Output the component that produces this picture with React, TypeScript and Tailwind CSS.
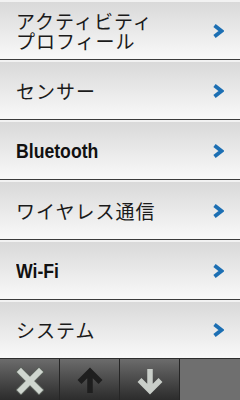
import { ReactNode } from 'react';

type Item = { label: ReactNode; bold?: boolean };

const items: Item[] = [
    { label: <>アクティビティ<br />プロフィール</> },
    { label: 'センサー' },
    { label: 'Bluetooth', bold: true },
    { label: 'ワイヤレス通信' },
    { label: 'Wi-Fi', bold: true },
    { label: 'システム' },
];

function Chevron() {
    return (
        <svg width="12" height="14" viewBox="0 0 12 14" className="shrink-0">
            <path d="M2.5 1.5 L9.5 7 L2.5 12.5" fill="none" stroke="#1c6fb3" strokeWidth="3.8" strokeLinejoin="miter" />
        </svg>
    );
}

function Row({ item, last }: { item: Item; last?: boolean }) {
    return (
        <div className="flex flex-col">
            <div className="h-[2px] bg-[#f2f2f2]" />
            <div className={`flex items-center justify-between pl-4 pr-[16px] bg-gradient-to-b from-[#d9d9d9] to-[#f9f9f9] ${last ? 'h-[56px]' : 'h-[57px]'}`}>
                {item.bold ? (
                    <div className="font-['Liberation_Sans',sans-serif] font-bold text-[21px] leading-[24px] text-[#111] inline-block origin-left scale-x-[0.84]">
                        {item.label}
                    </div>
                ) : (
                    <div className="font-['Noto_Sans_CJK_JP','Noto_Sans',sans-serif] text-[19px] leading-[20px] tracking-[1px] text-[#1a1a1a]">
                        {item.label}
                    </div>
                )}
                <Chevron />
            </div>
            {!last && <div className="h-[1px] bg-[#3c3c3c]" />}
        </div>
    );
}

function ToolButton({ children }: { children: ReactNode }) {
    return (
        <div className="w-[60px] h-full flex items-center justify-center bg-gradient-to-b from-[#6c6c6c] to-[#2c2c2c] border-r border-[#262626]">
            {children}
        </div>
    );
}

export default function App() {
    return (
        <div className="w-[240px] h-[400px] overflow-hidden flex flex-col bg-[#f2f2f2]">
            {items.map((item, key) => (
                <Row key={key} item={item} last={key === items.length - 1} />
            ))}
            <div className="flex h-[42px] border-t border-[#2e2e2e]">
                <ToolButton>
                    <svg width="28" height="28" viewBox="0 0 28 28" className="mt-[2px]">
                        <path d="M5 5 L23 23 M23 5 L5 23" stroke="#5a5f5a" strokeWidth="8" strokeLinecap="square" />
                        <path d="M5 5 L23 23 M23 5 L5 23" stroke="#cfd6cf" strokeWidth="6" strokeLinecap="square" />
                    </svg>
                </ToolButton>
                <ToolButton>
                    <svg width="28" height="28" viewBox="0 0 28 28" className="mt-[2px]">
                        <path d="M14 26 V6 M3.5 15 L14 4.5 L24.5 15" fill="none" stroke="#1e1e1e" strokeWidth="5.5" strokeLinejoin="miter" />
                    </svg>
                </ToolButton>
                <ToolButton>
                    <svg width="28" height="28" viewBox="0 0 28 28" className="mt-[2px]">
                        <path d="M14 2 V22 M3.5 13 L14 23.5 L24.5 13" fill="none" stroke="#c9cec9" strokeWidth="5.5" strokeLinejoin="miter" />
                    </svg>
                </ToolButton>
                <div className="flex-1 bg-[#6f6f6f]" />
            </div>
        </div>
    );
}
